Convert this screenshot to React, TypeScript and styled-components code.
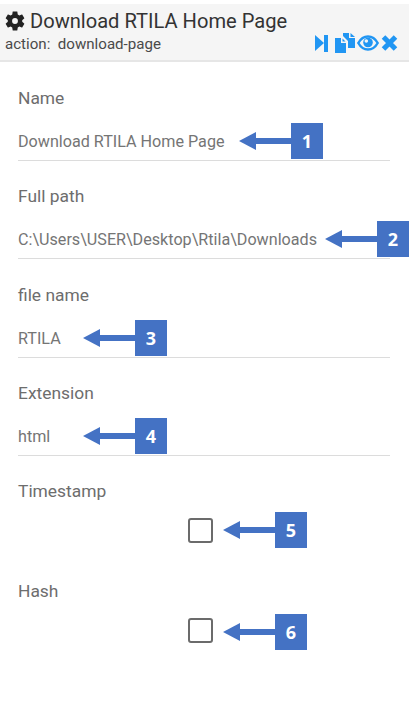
import React from "react"
import styled, { createGlobalStyle } from "styled-components"

const GlobalStyle = createGlobalStyle`
  html, body {
    margin: 0;
    padding: 0;
    background: #fff;
  }
  body {
    font-family: Roboto, "Liberation Sans", sans-serif;
  }
`

const Page = styled.div`
  width: 409px;
  height: 701px;
  padding-top: 4px;
  box-sizing: border-box;
`

const Header = styled.header`
  height: 58px;
  background: #f5f5f5;
  border-bottom: 2px solid #e6e6e6;
  box-sizing: border-box;
  padding: 4px 0 0 5px;
  position: relative;
`

const TitleRow = styled.div`
  display: flex;
  align-items: center;
  gap: 5px;
  height: 26px;
  color: #333;
  font-size: 20.1px;
  line-height: 26px;
`

const ActionRow = styled.div`
  font-size: 15.1px;
  line-height: 18px;
  margin-top: 1px;
  color: #4a4a4a;
  white-space: pre;
`

const Tools = styled.div`
  position: absolute;
  right: 11px;
  top: 29px;
  display: flex;
  align-items: center;
  gap: 2px;
  color: #2196f3;
`

const Form = styled.div`
  padding: 0 19px 0 18px;
`

const Field = styled.div`
  height: 98.33px;
  padding-top: 26px;
  box-sizing: border-box;
`

const Label = styled.div`
  font-size: 17.4px;
  line-height: 20px;
  height: 20px;
  color: #6d6d6d;
`

const InputRow = styled.div`
  position: relative;
  margin-top: 23px;
  height: 29px;
  line-height: 22px;
  font-size: 16.15px;
  color: #757575;
  border-bottom: 1px solid #dcdcdc;
`

const CheckField = styled.div`
  height: 100px;
  padding-top: 26px;
  box-sizing: border-box;
`

const CheckRow = styled.div`
  position: relative;
  margin-top: 17px;
  height: 25px;
  padding-left: 170px;
`

const Box = styled.div`
  width: 25px;
  height: 25px;
  box-sizing: border-box;
  border: 2px solid #6b6b6b;
  border-radius: 3px;
  background: #fff;
`

const Annotation = styled.div<{ $left: number; $top: number }>`
  position: absolute;
  left: ${(p) => p.$left}px;
  top: ${(p) => p.$top}px;
  display: flex;
  align-items: center;
`

const ArrowHead = styled.div`
  width: 0;
  height: 0;
  border-top: 9px solid transparent;
  border-bottom: 9px solid transparent;
  border-right: 17px solid #4472c4;
`

const ArrowShaft = styled.div`
  width: 35px;
  height: 6px;
  background: #4472c4;
`

const Badge = styled.div`
  width: 32px;
  height: 36px;
  background: #4472c4;
  color: #fff;
  font-family: "Open Sans", "Liberation Sans", sans-serif;
  font-weight: 700;
  font-size: 18px;
  line-height: 36px;
  text-align: center;
`

function Callout({ n, left, top }: { n: number; left: number; top: number }) {
  return (
    <Annotation $left={left} $top={top}>
      <ArrowHead />
      <ArrowShaft />
      <Badge>{n}</Badge>
    </Annotation>
  )
}

function Gear() {
  return (
    <svg width="20" height="20" viewBox="0 0 24 24" fill="#222">
      <path fillRule="evenodd" d="M19.400 13c.1-.3.1-.7.1-1s0-.7-.1-1l2.400-1.900c.2-.2.3-.4.1-.7l-2.300-4c-.1-.2-.4-.3-.7-.2l-2.900 1.200c-.6-.5-1.200-.8-1.900-1.100L13.600 1c0-.3-.3-.5-.5-.5h-4.600c-.3 0-.5.2-.5.5L7.500 4.300c-.7.3-1.300.6-1.900 1.100L2.700 4.200c-.3-.1-.5 0-.7.2l-2.300 4c-.1.3-.1.5.1.7L2.200 11c0 .3-.1.7-.1 1s0 .7.1 1L-.2 14.900c-.2.2-.3.4-.1.7l2.300 4c.1.2.4.3.7.2l2.900-1.200c.6.5 1.200.8 1.900 1.100l.5 3.300c0 .3.2.5.5.5h4.600c.2 0 .5-.2.5-.5l.5-3.300c.7-.3 1.300-.6 1.900-1.100l2.900 1.200c.3.1.5 0 .7-.2l2.300-4c.1-.3.1-.5-.1-.7L19.400 13zM10.800 15.500a3.500 3.500 0 1 1 0-7 3.500 3.500 0 0 1 0 7z" transform="translate(1.200 0)" />
    </svg>
  )
}

function ToolIcons() {
  return (
    <Tools>
      <svg width="18" height="20" viewBox="0 0 18 20" fill="currentColor">
        <path d="M0 2l9 8-9 8z" />
        <rect x="9" y="2" width="4" height="17" />
      </svg>
      <svg width="20" height="20" viewBox="0 0 20 20" fill="currentColor">
        <path d="M0 5h6v5h5v10H0z" />
        <path d="M7.500 5.500l3 3H7.500z" />
        <path d="M8 0h6v5h6v10h-7V8L8 3z" />
        <path d="M15.500 0l4.500 4h-4.500z" />
      </svg>
      <svg width="22" height="16" viewBox="0 0 22 16" fill="none" stroke="currentColor">
        <path strokeWidth="2.400" d="M1.300 8C3.800 3.500 7 1.500 11 1.500S18.200 3.500 20.700 8C18.200 12.500 15 14.500 11 14.500S3.800 12.500 1.300 8z" />
        <circle cx="11" cy="7.500" r="4.800" fill="currentColor" stroke="none" />
        <circle cx="9.300" cy="6" r="1.800" fill="#f5f5f5" stroke="none" />
      </svg>
      <svg width="17" height="16" viewBox="0 0 17 16" fill="none" stroke="currentColor">
        <path strokeWidth="5" d="M2.500 2l12 12M14.500 2l-12 12" />
      </svg>
    </Tools>
  )
}

export default function App() {
  return (
    <>
      <GlobalStyle />
      <Page>
        <Header>
          <TitleRow>
            <Gear />
            <span>Download RTILA Home Page</span>
          </TitleRow>
          <ActionRow>action:  download-page</ActionRow>
          <ToolIcons />
        </Header>
        <Form>
          <Field>
            <Label>Name</Label>
            <InputRow>
              Download RTILA Home Page
              <Callout n={1} left={221} top={-8} />
            </InputRow>
          </Field>
          <Field>
            <Label>Full path</Label>
            <InputRow>
              C:\Users\USER\Desktop\Rtila\Downloads
              <Callout n={2} left={307} top={-8} />
            </InputRow>
          </Field>
          <Field>
            <Label>file name</Label>
            <InputRow>
              RTILA
              <Callout n={3} left={65} top={-8} />
            </InputRow>
          </Field>
          <Field>
            <Label>Extension</Label>
            <InputRow>
              html
              <Callout n={4} left={65} top={-8} />
            </InputRow>
          </Field>
          <CheckField>
            <Label>Timestamp</Label>
            <CheckRow>
              <Box />
              <Callout n={5} left={205} top={-6} />
            </CheckRow>
          </CheckField>
          <CheckField>
            <Label>Hash</Label>
            <CheckRow>
              <Box />
              <Callout n={6} left={205} top={-4} />
            </CheckRow>
          </CheckField>
        </Form>
      </Page>
    </>
  )
}
